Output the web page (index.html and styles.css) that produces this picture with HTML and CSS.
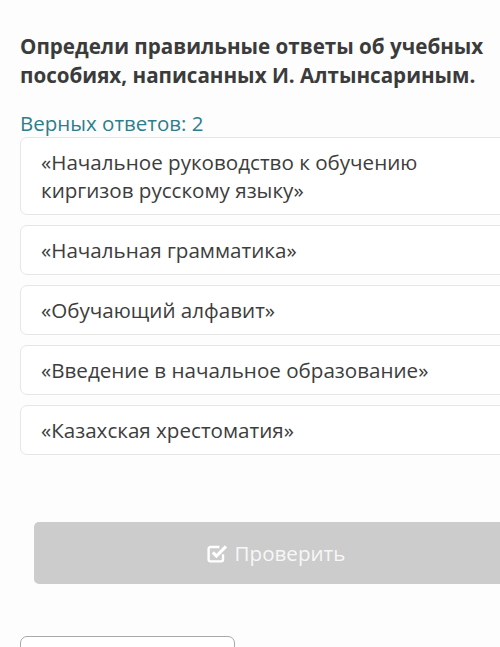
FILE: index.html
```html
<!DOCTYPE html>
<html lang="ru">
<head>
    <meta charset="UTF-8">
    <meta name="viewport" content="width=device-width, initial-scale=1.0">
    <title>Тест</title>
    <link rel="stylesheet" href="styles.css">
</head>
<body>
    <div class="page">
        <!-- Вопрос -->
        <h2 class="question">Определи правильные ответы об учебных пособиях, написанных И. Алтынсариным.</h2>
        <div class="hint">Верных ответов: 2</div>

        <!-- Варианты ответа -->
        <div class="options">
            <div class="option">«Начальное руководство к обучению<br>киргизов русскому языку»</div>
            <div class="option">«Начальная грамматика»</div>
            <div class="option">«Обучающий алфавит»</div>
            <div class="option">«Введение в начальное образование»</div>
            <div class="option">«Казахская хрестоматия»</div>
        </div>

        <button class="check-btn" disabled>
            <svg class="check-icon" width="24" height="24" viewBox="0 0 20 20">
                <path d="M15 11v4.5a1.5 1.5 0 0 1-1.5 1.5h-9A1.5 1.5 0 0 1 3 15.5v-9A1.5 1.5 0 0 1 4.5 5H12" fill="none" stroke="#fff" stroke-width="2"/>
                <path d="M6.5 9.5l3 3 8-8" fill="none" stroke="#fff" stroke-width="2.6"/>
            </svg>
            Проверить
        </button>

        <div class="next-box"></div>
    </div>
</body>
</html>
```

FILE: styles.css
```css
body {
    margin: 0;
    background-color: #fdfdfd;
    font-family: "Open Sans", Arial, sans-serif;
    overflow: hidden;
}
.page {
    width: 520px;
    padding: 32px 0 0 20px;
}
.question {
    font-size: 20.6px;
    font-weight: 700;
    line-height: 29px;
    color: #3b3b3b;
    margin: 0 0 21px 0;
    width: 480px;
}
.hint {
    font-size: 20.5px;
    color: #2e7d8c;
    line-height: 24px;
    margin-bottom: 2px;
}
.options {
    display: flex;
    flex-direction: column;
    gap: 10px;
}
.option {
    background-color: #fff;
    border: 1px solid #e6e6e6;
    border-radius: 7px;
    padding: 10px 20px;
    font-size: 20.6px;
    line-height: 28px;
    color: #3d3d3d;
}
.check-btn {
    display: flex;
    align-items: center;
    justify-content: center;
    gap: 6px;
    width: 482px;
    height: 62px;
    margin: 67px 0 0 14px;
    background-color: #cccccc;
    border: none;
    border-radius: 5px;
    color: #f7f7f7;
    font-family: inherit;
    font-size: 20.6px;
}
.next-box {
    width: 213px;
    height: 40px;
    margin-top: 52px;
    border: 1px solid #a9a9a9;
    border-radius: 7px;
    background-color: #fff;
}
```
